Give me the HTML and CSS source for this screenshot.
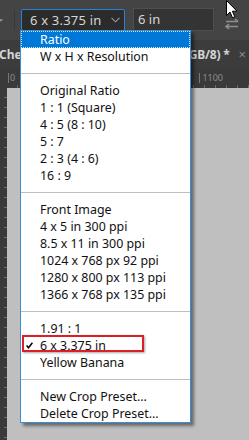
FILE: index.html
```html
<!DOCTYPE html>
<html>
<head>
<meta charset="utf-8">
<link rel="stylesheet" href="styles.css">
</head>
<body>
<div class="app">
  <div class="toolbar">
    <span class="caret"></span>
    <span class="divider"></span>
    <div class="select">
      <span class="select-text">6 x 3.375 in</span>
      <svg class="chev" width="9" height="6" viewBox="0 0 9 6"><path d="M0.5 0.8 L4.5 4.8 L8.5 0.8" fill="none" stroke="#9a9a9a" stroke-width="1.1"/></svg>
    </div>
    <div class="field">6 in</div>
    <svg class="swap" width="18" height="12" viewBox="0 0 18 12">
      <path d="M3 3.5 H15 M12 1 L15 3.5" fill="none" stroke="#8e8e8e" stroke-width="1.6"/>
      <path d="M15 8.5 H3 M6 6 L3 8.5 L6 11" fill="none" stroke="#8e8e8e" stroke-width="1.6"/>
    </svg>
  </div>
  <div class="tabbar">
    <span class="tab-left">Che</span>
    <span class="tab-right">GB/8) *</span>
    <span class="tab-close">×</span>
  </div>
  <div class="workspace">
    <div class="corner"></div>
    <div class="ruler-top">
      <span class="rt-zero">0</span>
      <span class="rt-label">1100</span>
    </div>
    <div class="ruler-left"></div>
    <div class="canvas"></div>
  </div>

  <div class="menu">
    <div class="item active">Ratio</div>
    <div class="item">W x H x Resolution</div>
    <div class="sep"></div>
    <div class="item">Original Ratio</div>
    <div class="item">1 : 1 (Square)</div>
    <div class="item">4 : 5 (8 : 10)</div>
    <div class="item">5 : 7</div>
    <div class="item">2 : 3 (4 : 6)</div>
    <div class="item">16 : 9</div>
    <div class="sep"></div>
    <div class="item">Front Image</div>
    <div class="item">4 x 5 in 300 ppi</div>
    <div class="item">8.5 x 11 in 300 ppi</div>
    <div class="item">1024 x 768 px 92 ppi</div>
    <div class="item">1280 x 800 px 113 ppi</div>
    <div class="item">1366 x 768 px 135 ppi</div>
    <div class="sep"></div>
    <div class="item">1.91 : 1</div>
    <div class="item checked">
      <svg class="check" width="7" height="7" viewBox="0 0 7 7"><path d="M0.6 3.6 L2.5 5.8 L6.4 0.8" fill="none" stroke="#000" stroke-width="1.5"/></svg>
      6 x 3.375 in
      <span class="highlight-box"></span>
    </div>
    <div class="item">Yellow Banana</div>
    <div class="sep"></div>
    <div class="item">New Crop Preset...</div>
    <div class="item">Delete Crop Preset...</div>
  </div>

  <svg class="cursor" width="12" height="19" viewBox="0 0 12 19">
    <path d="M0.5 0.5 L0.5 15.5 L4 12 L6.5 17.8 L8.8 16.8 L6.4 11.2 L11 11.2 Z" fill="#fff" stroke="#000" stroke-width="1"/>
  </svg>
</div>
</body>
</html>
```

FILE: styles.css
```css
* { box-sizing: border-box; }
html, body { margin: 0; padding: 0; }
body {
  width: 249px;
  height: 440px;
  overflow: hidden;
  background: #bfbfbf;
  font-family: "Noto Sans", "Open Sans", sans-serif;
}
.app {
  position: relative;
  width: 249px;
  height: 440px;
  display: flex;
  flex-direction: column;
}
.toolbar {
  height: 40px;
  background: #444444;
  display: flex;
  align-items: center;
  flex-shrink: 0;
}
.caret {
  width: 0;
  height: 0;
  border-left: 2px solid transparent;
  border-right: 2px solid transparent;
  border-top: 3px solid #8a8a8a;
  margin-left: -1px;
  margin-right: 11px;
}
.divider {
  width: 1px;
  height: 20px;
  background: #383838;
  margin-right: 6px;
}
.select {
  width: 104px;
  height: 22px;
  margin-top: -1px;
  border: 1px solid #2a7fd8;
  border-radius: 2px;
  background: #2b2b2b;
  display: flex;
  align-items: center;
  justify-content: space-between;
  padding: 0 4px 0 8px;
}
.select-text {
  color: #d6d6d6;
  font-size: 13px;
  letter-spacing: 0.2px;
}
.chev { margin-top: 1px; }
.field {
  width: 81px;
  height: 23px;
  margin-left: 8px;
  margin-top: -2px;
  background: #343434;
  border: 1px solid #4e4e4e;
  color: #d6d6d6;
  font-size: 13px;
  padding: 1px 0 0 4px;
  line-height: 19px;
}
.swap {
  margin-left: 9px;
  margin-top: 8px;
}
.tabbar {
  height: 28px;
  background: #3c3c3c;
  display: flex;
  align-items: center;
  flex-shrink: 0;
  color: #d4d4d4;
  font-size: 12px;
  font-weight: bold;
}
.tab-left { margin-left: -1px; }
.tab-right { margin-left: auto; margin-right: 9px; letter-spacing: -0.2px; }
.tab-close {
  font-weight: normal;
  color: #8a8a8a;
  font-size: 13px;
  margin-right: 3px;
}
.workspace {
  flex: 1;
  display: grid;
  grid-template-columns: 7px 1fr;
  grid-template-rows: 20px 1fr;
}
.corner { background: #3a3a3a; }
.ruler-top {
  background: #3a3a3a;
  position: relative;
  color: #8c8c8c;
  font-size: 9px;
  background-image: repeating-linear-gradient(90deg, transparent 0, transparent 10px, #6a6a6a 10px, #6a6a6a 11px);
  background-size: 100% 3px;
  background-position: 0 100%;
  background-repeat: no-repeat;
  display: flex;
  align-items: flex-start;
  padding-top: 5px;
}
.rt-zero { margin-left: 1px; border-left: 1px solid #777; padding-left: 1px; line-height: 10px; }
.rt-label { margin-left: auto; margin-right: 26px; border-left: 1px solid #777; padding-left: 2px; line-height: 10px; }
.ruler-left {
  background-color: #3a3a3a;
  background-image: repeating-linear-gradient(180deg, transparent 0, transparent 9px, #707070 9px, #707070 10px);
  background-size: 3px 100%;
  background-position: 100% 0;
  background-repeat: no-repeat;
}
.canvas { background: #bfbfbf; }

.menu {
  position: absolute;
  left: 20px;
  top: 30px;
  width: 171px;
  background: #ffffff;
  border: 1px solid #3b8ed3;
  box-shadow: 3px 3px 3px rgba(0, 0, 0, 0.45);
  padding: 0;
  font-size: 12.4px;
  color: #111;
}
.item {
  position: relative;
  height: 17px;
  line-height: 17px;
  padding-left: 19px;
  white-space: nowrap;
}
.item.active {
  background: #0078d7;
  color: #fff;
  outline: 1px dotted #cfe3f5;
  outline-offset: -1px;
}
.sep {
  height: 17px;
  display: flex;
  align-items: center;
}
.sep::after {
  content: "";
  display: block;
  width: 100%;
  height: 1px;
  background: #bdbdbd;
}
.check {
  position: absolute;
  left: 5px;
  top: 5px;
}
.highlight-box {
  position: absolute;
  left: 1px;
  top: -2px;
  width: 122px;
  height: 17px;
  border: 2px solid #dc1f27;
  box-shadow: 1px 1px 2px rgba(0, 0, 0, 0.35);
}
.cursor {
  position: absolute;
  left: 226px;
  top: 0px;
}
```
